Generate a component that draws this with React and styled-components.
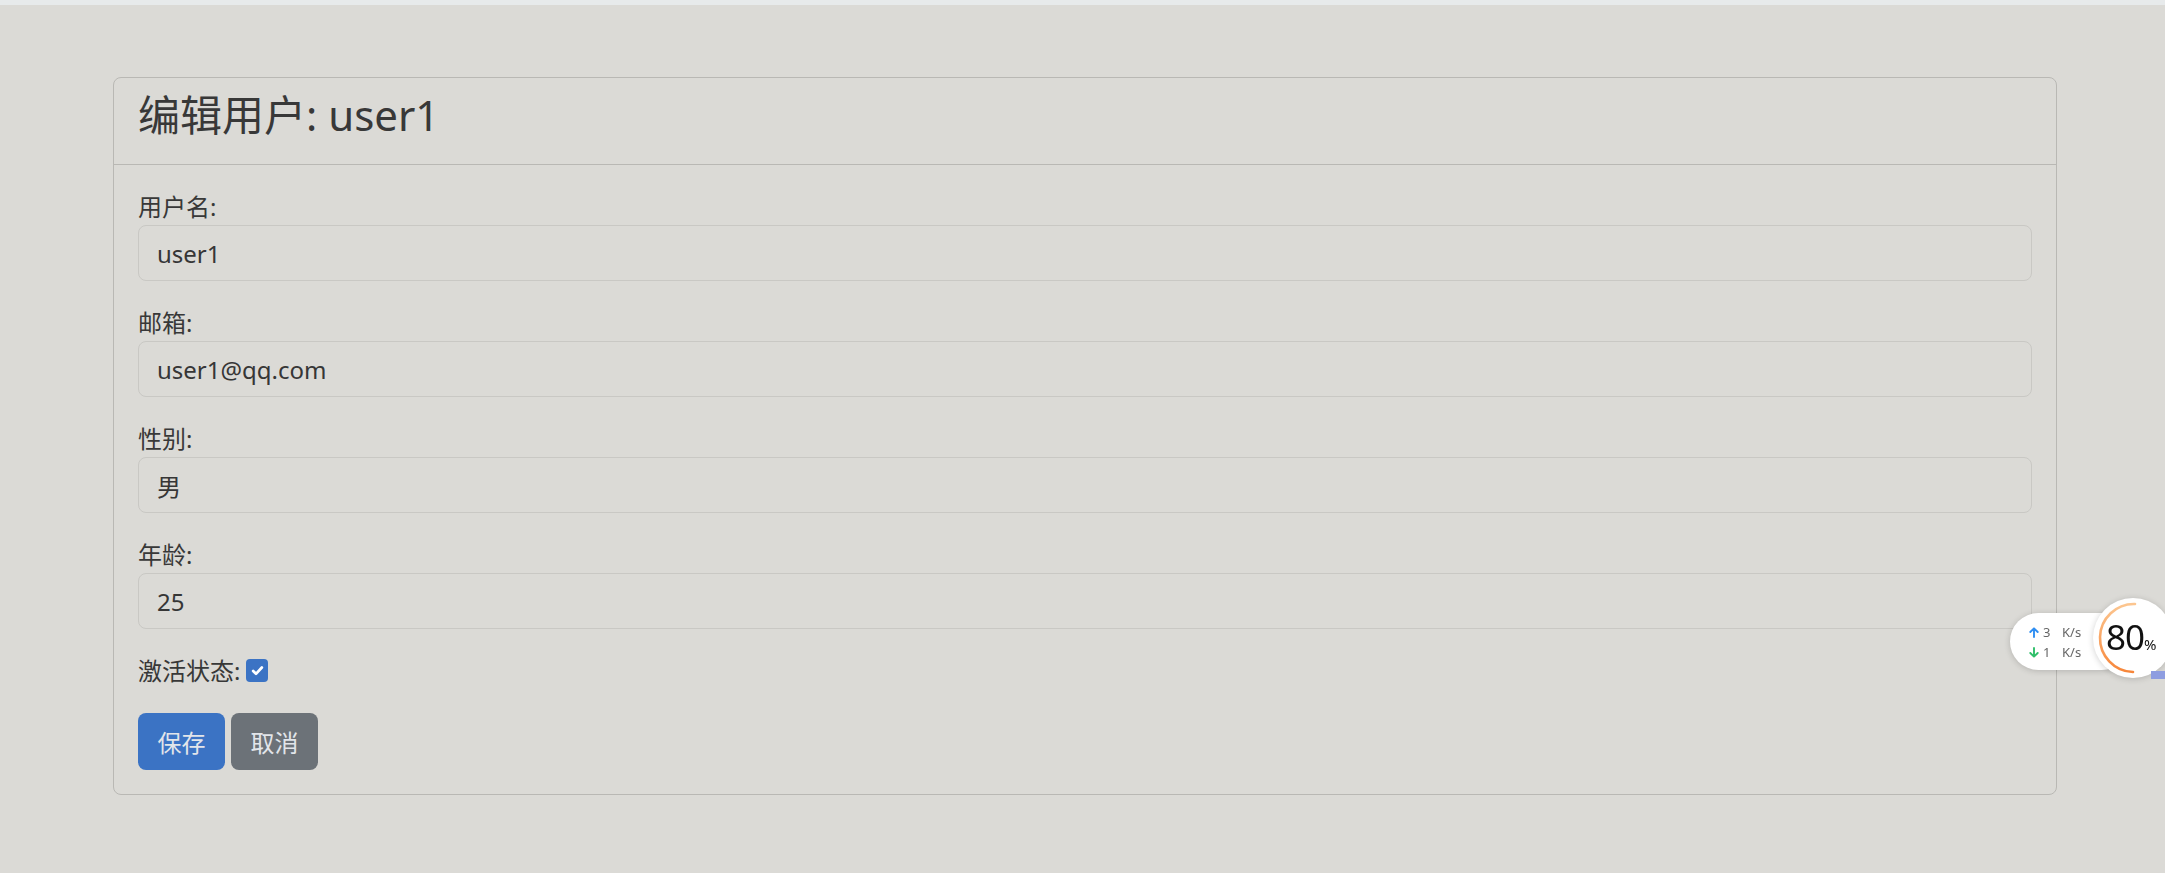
import styled, { createGlobalStyle } from 'styled-components';

const GlobalStyle = createGlobalStyle`
  html, body {
    margin: 0;
    padding: 0;
    background: #dbdad6;
    overflow: hidden;
  }
  body {
    font-family: "Noto Sans", "Noto Sans CJK SC", sans-serif;
    color: #363636;
  }
  * { box-sizing: border-box; }
`;

const fields = [
  { label: '用户名:', value: 'user1' },
  { label: '邮箱:', value: 'user1@qq.com' },
  { label: '性别:', value: '男' },
  { label: '年龄:', value: '25' },
];

// small arrow used in the network speed pill
const SpeedArrow = ({ color, down }) => (
  <svg width="10" height="11" viewBox="0 0 10 11" style={{ transform: down ? 'rotate(180deg)' : 'none' }}>
    <path d="M5 10V1.5M1.3 5L5 1.3 8.7 5" fill="none" stroke={color} strokeWidth="1.9" strokeLinecap="round" strokeLinejoin="round" />
  </svg>
);

const App = () => {
  return (
    <>
      <GlobalStyle />
      <TopStrip />
      <Page>
        <Card>
          <CardHeader>
            <Title>编辑用户: user1</Title>
          </CardHeader>
          <CardBody>
            {fields.map((f) => (
              <Group key={f.label}>
                <Label>{f.label}</Label>
                <Input readOnly value={f.value} />
              </Group>
            ))}
            <CheckRow>
              <Label>激活状态:</Label>
              <CheckBox>
                <svg width="15" height="15" viewBox="0 0 20 20">
                  <path
                    d="M4.2 10.6l3.8 3.8 7.8-8.4"
                    fill="none"
                    stroke="#fff"
                    strokeWidth="3.6"
                    strokeLinecap="round"
                    strokeLinejoin="round"
                  />
                </svg>
              </CheckBox>
            </CheckRow>
            <Actions>
              <Button $variant="primary">保存</Button>
              <Button $variant="secondary">取消</Button>
            </Actions>
          </CardBody>
        </Card>
      </Page>

      <SpeedWidget>
        <Pill>
          <SpeedLine>
            <Arrow><SpeedArrow color="#2f8ef2" /></Arrow>
            <Num>3</Num>
            <Unit>K/s</Unit>
          </SpeedLine>
          <SpeedLine>
            <Arrow><SpeedArrow color="#2fbf6a" down /></Arrow>
            <Num>1</Num>
            <Unit>K/s</Unit>
          </SpeedLine>
        </Pill>
        <Gauge>
          <svg width="80" height="80" viewBox="0 0 80 80">
            <defs>
              <linearGradient id="ring" x1="0" y1="0" x2="0" y2="1">
                <stop offset="0" stopColor="#fcc690" />
                <stop offset="1" stopColor="#f7863a" />
              </linearGradient>
            </defs>
            <path
              d="M42 6 A34 34 0 0 0 40 74"
              fill="none"
              stroke="url(#ring)"
              strokeWidth="2.6"
              strokeLinecap="round"
            />
          </svg>
          <Percent>
            80<small>%</small>
          </Percent>
        </Gauge>
        <Blob />
      </SpeedWidget>
    </>
  );
};

export default App;

const TopStrip = styled.div`
  height: 5px;
  background: #e7eaeb;
`;

const Page = styled.main`
  padding: 72px 108px 0 113px;
`;

const Card = styled.section`
  border: 1px solid #b9b8b4;
  border-radius: 8px;
  background: #dbdad6;
`;

const CardHeader = styled.header`
  padding: 12px 24px;
  border-bottom: 1px solid #b9b8b4;
`;

const Title = styled.h3`
  margin: 0 0 12px;
  font-size: 42px;
  font-weight: 400;
  line-height: 50.4px;
  color: #383838;
`;

const CardBody = styled.div`
  padding: 24px;
`;

const Group = styled.div`
  margin-bottom: 24px;
`;

const Label = styled.label`
  display: block;
  font-size: 24px;
  line-height: 36px;
  color: #383838;
`;

const Input = styled.input`
  display: block;
  width: 100%;
  height: 56px;
  padding: 0 18px;
  font-family: inherit;
  font-size: 24px;
  color: #363636;
  background: #dbdad6;
  border: 1px solid #c9c8c4;
  border-radius: 8px;
  outline: none;
`;

const CheckRow = styled.div`
  display: flex;
  align-items: center;
  gap: 6px;
  margin-bottom: 24px;
`;

const CheckBox = styled.span`
  display: inline-flex;
  align-items: center;
  justify-content: center;
  width: 22px;
  height: 23px;
  margin-top: -2px;
  border-radius: 4px;
  background: #3b73c4;
`;

const Actions = styled.div`
  display: flex;
  gap: 6px;
`;

const Button = styled.button`
  height: 57px;
  padding: 0 19.5px;
  font-family: inherit;
  font-size: 24px;
  color: #e2e5ea;
  border: none;
  border-radius: 8px;
  background: ${({ $variant }) => ($variant === 'primary' ? '#3b73c4' : '#6c7278')};
  cursor: pointer;
`;

const SpeedWidget = styled.div`
  position: fixed;
  left: 2010px;
  top: 598px;
  width: 165px;
  height: 82px;
`;

const Pill = styled.div`
  position: absolute;
  left: 0;
  top: 15px;
  width: 120px;
  height: 57px;
  padding: 9px 0 0 19px;
  border-radius: 29px;
  background: #fff;
  box-shadow: 0 1px 6px rgba(0, 0, 0, 0.18);
`;

const SpeedLine = styled.div`
  display: flex;
  align-items: center;
  height: 20px;
  font-family: "Noto Sans", sans-serif;
  font-size: 13px;
  color: #666;
`;

const Arrow = styled.span`
  display: inline-flex;
  width: 14px;
`;

const Num = styled.span`
  width: 19px;
`;

const Unit = styled.span``;

const Gauge = styled.div`
  position: absolute;
  left: 83px;
  top: 0;
  width: 80px;
  height: 80px;
  border-radius: 50%;
  background: #fff;
  box-shadow: 0 1px 6px rgba(0, 0, 0, 0.18);

  svg {
    position: absolute;
    left: 0;
    top: 0;
  }
`;

const Percent = styled.div`
  position: absolute;
  left: 13px;
  top: 18px;
  font-family: "Noto Sans", sans-serif;
  font-size: 35px;
  line-height: 42px;
  color: #111;
  letter-spacing: -1px;

  small {
    font-size: 15px;
    letter-spacing: 0;
  }
`;

const Blob = styled.div`
  position: absolute;
  left: 141px;
  top: 73px;
  width: 24px;
  height: 8px;
  border-radius: 0 0 14px 0;
  background: #8e9de0;
`;
